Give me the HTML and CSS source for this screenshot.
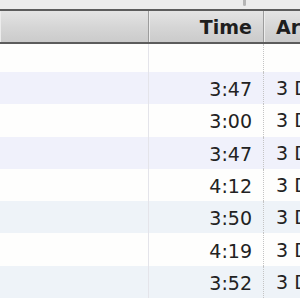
FILE: index.html
```html
<!DOCTYPE html>
<html lang="en">
<head>
    <meta charset="utf-8"/>
    <title>Song list</title>
    <link rel="stylesheet" href="styles.css">
</head>
<body>
    <div class="top"><span class="grip"></span></div>

    <div class="list">
        <div class="head">
            <div class="cell"></div>
            <div class="cell time">Time</div>
            <div class="cell artist">Artist</div>
        </div>

        <div class="row blank">
            <div class="cell"></div>
            <div class="cell time"></div>
            <div class="cell artist"></div>
        </div>
        <div class="row lilac">
            <div class="cell"></div>
            <div class="cell time">3:47</div>
            <div class="cell artist">3 Doors Down</div>
        </div>
        <div class="row">
            <div class="cell"></div>
            <div class="cell time">3:00</div>
            <div class="cell artist">3 Doors Down</div>
        </div>
        <div class="row lilac">
            <div class="cell"></div>
            <div class="cell time">3:47</div>
            <div class="cell artist">3 Doors Down</div>
        </div>
        <div class="row">
            <div class="cell"></div>
            <div class="cell time">4:12</div>
            <div class="cell artist">3 Doors Down</div>
        </div>
        <div class="row blue">
            <div class="cell"></div>
            <div class="cell time">3:50</div>
            <div class="cell artist">3 Doors Down</div>
        </div>
        <div class="row">
            <div class="cell"></div>
            <div class="cell time">4:19</div>
            <div class="cell artist">3 Doors Down</div>
        </div>
        <div class="row blue">
            <div class="cell"></div>
            <div class="cell time">3:52</div>
            <div class="cell artist">3 Doors Down</div>
        </div>
    </div>
</body>
</html>
```

FILE: styles.css
```css
body {
    margin: 0;
    height: 300px;
    overflow: hidden;
    background: #fff;
    font-family: "DejaVu Sans", sans-serif;
    font-size: 19px;
    color: #222;
}

.top {
    height: 9px;
    background: #ececec;
    display: flex;
    padding-left: 243px;
}

.grip {
    width: 3px;
    height: 6px;
    background: #b5b5b5;
    border-radius: 0 0 2px 2px;
}

/* header bar */
.head,
.row {
    display: grid;
    grid-template-columns: 149px 115px 1fr;
}

.head {
    height: 31px;
    border-top: 2px solid #5c5c5c;
    border-bottom: 2px solid #5c5c5c;
    background: linear-gradient(#e4e4e4, #d6d6d6 50%, #cbcbcb);
    font-weight: bold;
    color: #1e1e1e;
}

.cell {
    display: flex;
    align-items: center;
    white-space: nowrap;
    overflow: hidden;
}

.head .cell {
    border-right: 1px solid #9c9c9c;
    box-shadow: inset 1px 0 0 #ececec;
}

.head .cell:last-child {
    border-right: none;
}

.time {
    justify-content: flex-end;
    padding-right: 11px;
}

.artist {
    padding-left: 12px;
}

/* rows */
.row {
    height: 32.3px;
    background: #fefefd;
}

.row.blank {
    height: 28px;
}

.row.lilac {
    background: #f0f1fb;
}

.row.blue {
    background: #eef3f8;
}

.row .cell:first-child {
    border-right: 1px solid #e4e4ea;
}

.row .time {
    border-right: 1px dotted #c4c4c4;
    padding-top: 2px;
}
```
